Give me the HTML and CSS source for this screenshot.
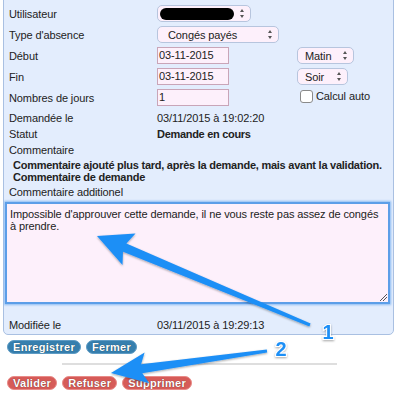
FILE: index.html
```html
<!doctype html>
<html>

<head>
    <meta charset="utf-8">
    <title>Demande d'absence</title>
    <link rel="stylesheet" href="styles.css">
</head>

<body>
<div class="panel">
    <div class="row ctl">
        <label>Utilisateur</label>
        <div class="sel sel-user"><span class="masked"></span><i class="updown"></i></div>
    </div>
    <div class="row ctl">
        <label>Type d'absence</label>
        <div class="sel sel-type"><span>Congés payés</span><i class="updown"></i></div>
    </div>
    <div class="row ctl">
        <label>Début</label>
        <div class="txt">03-11-2015</div>
        <div class="sel sel-half"><span>Matin</span><i class="updown"></i></div>
    </div>
    <div class="row ctl">
        <label>Fin</label>
        <div class="txt">03-11-2015</div>
        <div class="sel sel-half sel-soir"><span>Soir</span><i class="updown"></i></div>
    </div>
    <div class="row ctl">
        <label>Nombres de jours</label>
        <div class="txt">1</div>
        <div class="check"><span class="box"></span>Calcul auto</div>
    </div>
    <div class="row info first">
        <label>Demandée le</label>
        <div>03/11/2015 à 19:02:20</div>
    </div>
    <div class="row info">
        <label>Statut</label>
        <div class="strong">Demande en cours</div>
    </div>
    <div class="row info short">
        <label>Commentaire</label>
    </div>
    <div class="comment">
        Commentaire ajouté plus tard, après la demande, mais avant la validation.<br>
        Commentaire de demande
    </div>
    <div class="row info">
        <label>Commentaire additionel</label>
    </div>
    <div class="area">Impossible d'approuver cette demande, il ne vous reste pas assez de congés à&nbsp;prendre.<i class="grip"></i></div>
    <div class="row info modif">
        <label>Modifiée le</label>
        <div>03/11/2015 à 19:29:13</div>
    </div>
</div>

<div class="actions">
    <a class="btn blue" href="#">Enregistrer</a>
    <a class="btn blue" href="#">Fermer</a>
</div>
<div class="sep"></div>
<div class="actions">
    <a class="btn red" href="#">Valider</a>
    <a class="btn red" href="#">Refuser</a>
    <a class="btn red" href="#">Supprimer</a>
</div>

<!-- flèches d'annotation -->
<svg class="marks" width="402" height="400" viewBox="0 0 402 400">
    <defs>
        <filter id="sh" x="-10%" y="-10%" width="120%" height="130%">
            <feDropShadow dx="0" dy="1" stdDeviation="1" flood-color="#000" flood-opacity="0.35"/>
        </filter>
    </defs>
    <g fill="#1f8ff6" filter="url(#sh)">
        <polygon points="97,236 135.5,233.5 126.4,243.5 310.6,323.6 309.4,326.4 123,251.7 122.5,265"/>
        <polygon points="111,373 144.6,352.6 141.1,364.3 266.8,349.5 267.2,352.5 142.3,373.3 149.3,383.3"/>
    </g>
    <g class="num" filter="url(#sh)">
        <text x="328" y="339">1</text>
        <text x="281" y="356">2</text>
    </g>
</svg>
</body>

</html>
```

FILE: styles.css
```css
* {
    padding: 0;
    margin: 0;
    box-sizing: border-box;
}

body {
    margin: 0 8px 0 3px;
    font-family: 'Liberation Sans', Arial, sans-serif;
    font-size: 11px;
    letter-spacing: -0.1px;
    color: #222;
    background: #fff;
    position: relative;
}

.panel {
    margin-top: -1px;
    padding: 4px 3px 1px 1px;
    background: #e3edfd;
    border: 1px solid #a9c0e2;
    border-radius: 0 0 5px 5px;
}

.row {
    display: flex;
    align-items: center;
    padding-left: 4px;
}

.row label {
    width: 148px;
    flex: none;
}

.row.ctl {
    height: 19px;
    margin-bottom: 2px;
}

.row.info {
    height: 16px;
}

.row.info.first {
    margin-top: 3px;
}

.row.info.short {
    height: 15px;
}

.strong {
    font-weight: bold;
    letter-spacing: -0.3px;
}

.sel {
    height: 17px;
    display: flex;
    align-items: center;
    justify-content: space-between;
    padding: 0 5px 0 10px;
    background: #fdf0fb;
    border: 1px solid #b7c5de;
    border-radius: 5px;
}

.sel-user {
    width: 94px;
    padding-left: 2px;
}

.masked {
    width: 74px;
    height: 12px;
    background: #000;
    border-radius: 6px;
}

.sel-type {
    width: 122px;
}

.sel-half {
    width: 57px;
    margin-left: 68px;
    padding-left: 7px;
}

.sel-soir {
    width: 51px;
}

.updown {
    width: 5px;
    height: 9px;
    position: relative;
}

.updown::before,
.updown::after {
    content: '';
    position: absolute;
    left: 0;
    border-left: 2.5px solid transparent;
    border-right: 2.5px solid transparent;
}

.updown::before {
    top: 0;
    border-bottom: 3.5px solid #555;
}

.updown::after {
    bottom: 0;
    border-top: 3.5px solid #555;
}

.txt {
    width: 72px;
    height: 17px;
    line-height: 15px;
    padding-left: 1px;
    background: #fdf0fb;
    border: 1px solid #c9a5b8;
}

.check {
    display: flex;
    align-items: center;
    margin-left: 71px;
    margin-top: -3px;
}

.check .box {
    width: 13px;
    height: 13px;
    margin-right: 3px;
    background: #fff;
    border: 1px solid #8a8a8a;
    border-radius: 3px;
}

.comment {
    margin-top: 2px;
    padding-left: 8px;
    font-weight: bold;
    letter-spacing: -0.25px;
    line-height: 12px;
    margin-bottom: 1px;
}

.area {
    position: relative;
    height: 102px;
    margin-top: 2px;
    padding: 4px 0 0 3px;
    line-height: 12px;
    background: #fdf0fb;
    border: 2px solid #5c9ee8;
    box-shadow: 0 0 2px 1px #8cbcf2;
}

.grip {
    position: absolute;
    right: 1px;
    bottom: 1px;
    width: 7px;
    height: 7px;
    background: linear-gradient(135deg, transparent 45%, #555 45%, #555 52%, transparent 52%, transparent 70%, #555 70%, #555 77%, transparent 77%);
}

.row.modif {
    margin-top: 13px;
}

.actions {
    display: flex;
    gap: 5px;
    padding-left: 4px;
    margin-top: 5px;
}

.btn {
    display: block;
    height: 14px;
    line-height: 12px;
    padding: 0 5px;
    border-radius: 7px;
    font-size: 11px;
    font-weight: bold;
    letter-spacing: 0.3px;
    color: #fff;
    text-decoration: none;
    text-shadow: 0 0 1px rgba(0, 0, 0, 0.6);
}

.btn.blue {
    background: #367fae;
    border: 1px solid #5e9bc4;
}

.btn.red {
    background: #d65b58;
    border: 1px solid #e98b88;
}

.sep {
    width: 275px;
    height: 2px;
    margin: 9px 0 0 59px;
    background: #dedede;
}

.actions + .sep + .actions {
    margin-top: 11px;
}

.marks {
    position: absolute;
    left: -3px;
    top: 0;
}

.num text {
    font: bold 20px 'Liberation Sans', Arial, sans-serif;
    letter-spacing: 0;
    fill: #1f8ff6;
    stroke: #fff;
    stroke-width: 2px;
    paint-order: stroke;
    text-anchor: middle;
}
```
